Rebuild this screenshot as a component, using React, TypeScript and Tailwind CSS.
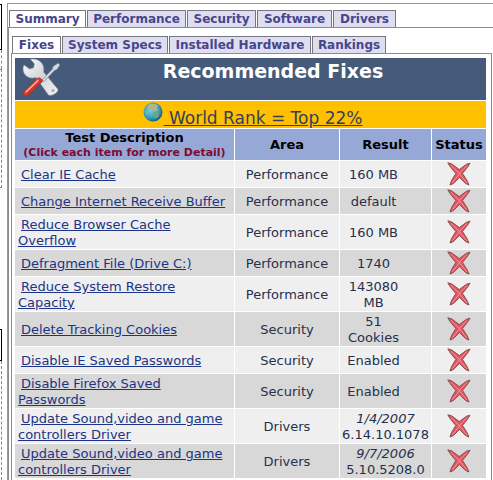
import clsx from 'clsx';

type Fix = {
  name: string;
  area: string;
  result: string[];
  driver?: boolean;
};

const mainTabs = [
  { label: 'Summary', width: 'w-[77px]' },
  { label: 'Performance', width: 'w-[99px]' },
  { label: 'Security', width: 'w-[69px]' },
  { label: 'Software', width: 'w-[75px]' },
  { label: 'Drivers', width: 'w-[63px]' },
];

const subTabs = [
  { label: 'Fixes', width: 'w-[49px]' },
  { label: 'System Specs', width: 'w-[106px]' },
  { label: 'Installed Hardware', width: 'w-[142px]' },
  { label: 'Rankings', width: 'w-[74px]' },
];

const fixes: Fix[] = [
  { name: 'Clear IE Cache', area: 'Performance', result: ['160 MB'] },
  { name: 'Change Internet Receive Buffer', area: 'Performance', result: ['default'] },
  { name: 'Reduce Browser Cache Overflow', area: 'Performance', result: ['160 MB'] },
  { name: 'Defragment File (Drive C:)', area: 'Performance', result: ['1740'] },
  { name: 'Reduce System Restore Capacity', area: 'Performance', result: ['143080', 'MB'] },
  { name: 'Delete Tracking Cookies', area: 'Security', result: ['51', 'Cookies'] },
  { name: 'Disable IE Saved Passwords', area: 'Security', result: ['Enabled'] },
  { name: 'Disable Firefox Saved Passwords', area: 'Security', result: ['Enabled'] },
  { name: 'Update Sound,video and game controllers Driver', area: 'Drivers', result: ['1/4/2007', '6.14.10.1078'], driver: true },
  { name: 'Update Sound,video and game controllers Driver', area: 'Drivers', result: ['9/7/2006', '5.10.5208.0'], driver: true },
];

function Tabs({ items, label }: { items: typeof mainTabs; label: string }) {
  return (
    <nav aria-label={label} className="flex gap-px">
      {items.map((tab, i) => (
        <a
          key={tab.label}
          href="#"
          className={clsx(
            'h-[17px] shrink-0 border border-b-0 border-[#77777f] text-center text-xs leading-[17px] font-bold whitespace-nowrap text-[#46468c]',
            tab.width,
            i === 0 ? 'bg-white' : 'bg-[#dedef0]'
          )}
        >
          {tab.label}
        </a>
      ))}
    </nav>
  );
}

function ToolsIcon() {
  return (
    <svg width="38" height="40" viewBox="0 0 38 40" aria-hidden="true" className="shrink-0">
      <defs>
        <linearGradient id="steel" x1="0" y1="0" x2="1" y2="1">
          <stop offset="0" stopColor="#fafafa" />
          <stop offset="0.5" stopColor="#d3d5d8" />
          <stop offset="1" stopColor="#f2f2f2" />
        </linearGradient>
        <linearGradient id="handle" x1="0" y1="0" x2="1" y2="1">
          <stop offset="0" stopColor="#f27a68" />
          <stop offset="0.5" stopColor="#d83a2c" />
          <stop offset="1" stopColor="#9c1c18" />
        </linearGradient>
      </defs>
      <path
        d="M8.500 1 L12.500 6 L11.500 10 L7.500 11 L2 7 C0 11 1.500 17 6 19 C9 20.500 12 20 14 19.500 L26.500 37 C29 38.500 36 35 36 31.500 L21.500 14 C23 7 18.500 .2 8.500 1Z"
        fill="url(#steel)"
        stroke="#9ca2ac"
        strokeWidth=".5"
      />
      <circle cx="31" cy="32.500" r="1.500" fill="#a3a8b0" />
      <path d="M20 22 L30.500 11 L31 8.500 L36 5 L38 7 L35 11.500 L32.500 12.500 L22 23.500Z" fill="#d5dae0" stroke="#727c8c" strokeWidth=".7" />
      <path d="M1.500 34 L15.500 20 C18 18.500 21.500 22 20 24 L6 37.500 C3 39.500 -.5 36.500 1.500 34Z" fill="url(#handle)" stroke="#9c2420" strokeWidth=".5" />
      <path d="M4 34 L16 22.500" stroke="#ffb4a6" strokeWidth="1.400" strokeLinecap="round" />
    </svg>
  );
}

function GlobeIcon() {
  return (
    <svg width="20" height="20" viewBox="0 0 20 20" aria-hidden="true" className="mt-px shrink-0">
      <defs>
        <radialGradient id="ocean" cx=".4" cy=".38" r=".7">
          <stop offset="0" stopColor="#7fd0e0" />
          <stop offset="0.65" stopColor="#3399b8" />
          <stop offset="1" stopColor="#0b4568" />
        </radialGradient>
      </defs>
      <circle cx="10" cy="10" r="9.500" fill="url(#ocean)" />
      <path d="M5 3.500 C8 1 12 1.500 15 3.500 L13.500 6 L15.500 8.500 L11.500 9 L9.500 6.500 L7 8 L5 6.500Z" fill="#b8b48a" />
      <path d="M10 10.500 L14 9.500 L16.500 12 L14.500 15.500 L12 16.500 L11 13.500Z" fill="#6fa67c" />
      <path d="M2.500 8 L5 9.500 L5.500 12 L3.500 13Z" fill="#85b8a0" />
    </svg>
  );
}

function FailedIcon() {
  return (
    <svg width="24" height="24" viewBox="0 0 24 24" role="img" aria-label="Failed" className="mx-auto block">
      <path
        d="M.8 .8 L4.500 1.800 L12.300 7.500 L19.500 2.200 L23 1.200 L21 4.500 L15.500 11.500 L20 18.500 L22 23 L18.500 21.500 L12.500 15.500 L6.500 21.500 L3 23 L4.500 18.500 L8.800 11.500 L3 4.500Z"
        fill="#e05560"
        stroke="#80484c"
        strokeWidth=".9"
        strokeLinejoin="round"
      />
      <path d="M4 3.500 L12.300 11.500 L19.500 4 M12.300 11.500 L19.500 20.500 M12.300 12 L5.500 20.500" fill="none" stroke="#fa9599" strokeWidth="1" strokeLinecap="round" />
    </svg>
  );
}

export default function App() {
  return (
    <div className="flex min-h-screen bg-white font-['DejaVu_Sans',Verdana,sans-serif] text-[13px] leading-4 text-[#26304c]">
      {/* edge of the neighbouring column */}
      <div className="flex w-[7px] shrink-0 flex-col pt-1">
        <div className="h-[46px] w-0.5 border-y border-r border-black" />
        <div className="h-[19px] w-0.5 border-r border-dashed border-[#888]" />
        <div className="h-[119px] w-0.5 border-y border-r border-dashed border-[#888]" />
        <div className="mt-[141px] h-8 w-0.5 border-y border-r border-black" />
        <div className="w-0.5 grow border-r border-dashed border-[#888]" />
      </div>

      <div className="mt-[3px] flex min-w-0 grow flex-col border-t border-l border-[#999]">
        <div className="pt-1.5 pl-px">
          <Tabs items={mainTabs} label="Results" />
        </div>
        <div className="flex grow flex-col border-t border-l border-[#8c8c8c] pt-2 pl-0.5">
          <div className="pl-px">
            <Tabs items={subTabs} label="Summary" />
          </div>
          <main className="mr-px grow border border-b-0 border-[#8c8c8c] pt-[3px] pr-1 pl-0.5">
            <table className="w-full table-fixed border-separate border-spacing-px">
              <colgroup>
                <col />
                <col className="w-[104px]" />
                <col className="w-[91px]" />
                <col className="w-[54px]" />
              </colgroup>
              <thead>
                <tr>
                  <th colSpan={4} className="bg-[#465a7a] p-0 text-white">
                    <div className="flex h-[42px] items-start pl-[7px]">
                      <ToolsIcon />
                      <h1 className="grow pt-[3px] text-center text-[19px] leading-5 font-bold">Recommended Fixes</h1>
                    </div>
                  </th>
                </tr>
                <tr>
                  <td colSpan={4} className="bg-[#ffc000] p-0">
                    <a href="#" className="flex h-[27px] items-start justify-center gap-px pl-1 text-[#33405a]">
                      <GlobeIcon />
                      <span className="pt-[7px] text-[17px] leading-5 underline">&nbsp;World Rank = Top 22%</span>
                    </a>
                  </td>
                </tr>
                <tr className="h-[31px] bg-[#96a8d6] text-black">
                  <th className="p-0 leading-[15px] whitespace-nowrap">
                    Test Description
                    <span className="block text-[11px] leading-[15px] text-[#7c0c34]">(Click each item for more Detail)</span>
                  </th>
                  <th className="p-0">Area</th>
                  <th className="p-0">Result</th>
                  <th className="p-0">Status</th>
                </tr>
              </thead>
              <tbody>
                {fixes.map((fix, i) => (
                  <tr key={i} className={clsx('h-[26px]', i % 2 ? 'bg-[#d8d8d8]' : 'bg-[#efefef]')}>
                    <td className="pt-0.5 pr-1.5 pb-0 pl-[3px] indent-[3px]">
                      <a href="#" className="text-[#1c3486] underline">{fix.name}</a>
                    </td>
                    <td className="px-0 pt-0.5 pb-0 text-center">{fix.area}</td>
                    <td className={clsx('pt-0.5 pb-0 text-center whitespace-nowrap', fix.driver ? 'px-0' : 'pr-6')}>
                      {fix.result.map((line, n) => (
                        <div key={line} className={clsx(fix.driver && n === 0 && 'italic')}>{line}</div>
                      ))}
                    </td>
                    <td className="p-0">
                      <FailedIcon />
                    </td>
                  </tr>
                ))}
              </tbody>
            </table>
          </main>
        </div>
      </div>
    </div>
  );
}
